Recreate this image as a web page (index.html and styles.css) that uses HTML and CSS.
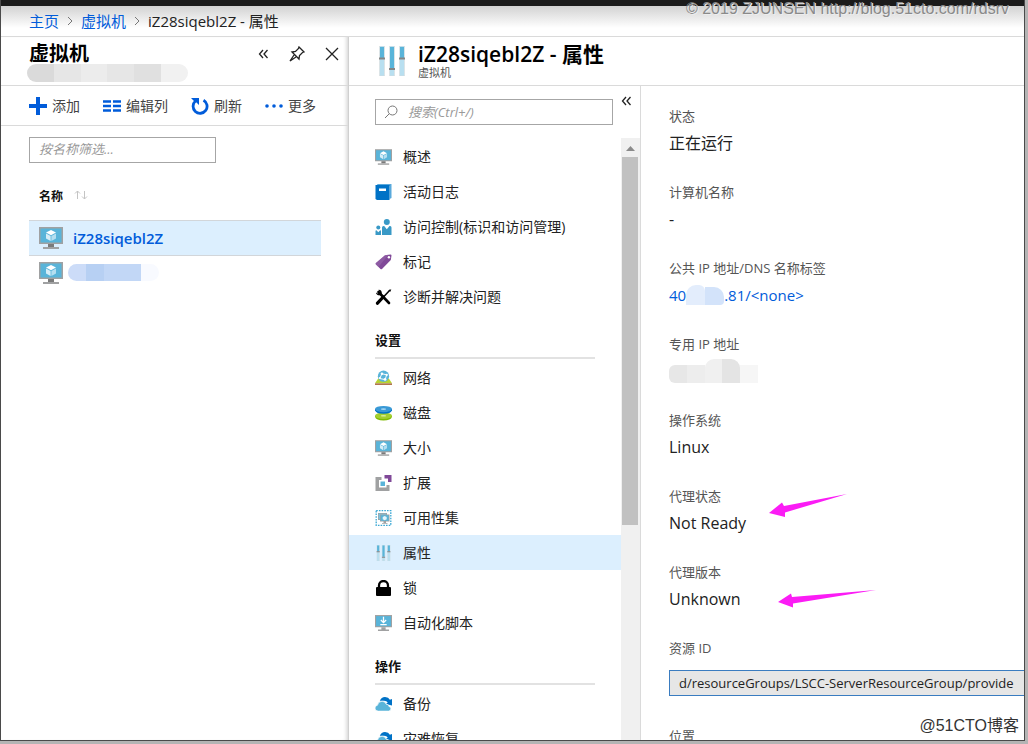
FILE: index.html
```html
<!DOCTYPE html>
<html lang="zh-CN">
<head>
<meta charset="utf-8">
<meta name="viewport" content="width=device-width, initial-scale=1">
<title>iZ28siqebl2Z - 属性</title>
<link rel="stylesheet" href="styles.css">
</head>
<body>
<svg class="sprite" aria-hidden="true">
  <symbol id="i-vm" viewBox="0 0 24 22">
    <path fill="#a0a1a2" d="M0 0h24v17H0z"/><path fill="#59b4d9" d="M1.500 1.500h21v14h-21z"/>
    <path fill="#7a7a7a" d="M9 17h6v3H9z"/><path fill="#a0a1a2" d="M4 20h16v2H4z"/>
    <path fill="#fff" d="M12 3l5 2.600-5 2.600-5-2.600z"/><path fill="#d6edf7" d="M7 6.500l4.600 2.400v5.100L7 11.500z"/><path fill="#b5def0" d="M17 6.500l-4.600 2.400v5.100l4.600-2.500z"/>
  </symbol>
  <symbol id="i-log" viewBox="0 0 16 16">
    <path fill="#59a9dc" d="M2 0h14v14l-2 1V2H1z"/><path fill="#0072c6" d="M0 1h14v15H1.500L0 15z"/><path fill="#fff" d="M3.500 4.500h7v2.500h-7z"/>
  </symbol>
  <symbol id="i-people" viewBox="0 0 16 16">
    <g fill="#3999c6"><circle cx="11.300" cy="3" r="3"/><path d="M6.500 16V8.500Q6.500 7 8 7h.7l2.600 3.200L14 7h.6Q16 7 16 8.500V16z"/><circle cx="2.800" cy="8.500" r="2"/><path d="M0 16v-4q0-.8.900-.8l1.900 2 1.900-2q.8 0 .8.800v4z"/></g>
  </symbol>
  <symbol id="i-tag" viewBox="0 0 16 16">
    <path fill="#804998" d="M9.500 1.200L15 .5q1 0 1 1L15.300 6 6.500 15q-.8.700-1.500 0L.4 10.500q-.7-.7 0-1.400z"/><path fill="#9a6bae" d="M9.500 1.200L.4 9.100q-.7.700 0 1.400L3 13 13 .8z" opacity=".5"/><circle cx="13.400" cy="3.200" r="1.200" fill="#fff"/>
  </symbol>
  <symbol id="i-tools" viewBox="0 0 16 16">
    <path d="M3 3l10.500 11" stroke="#000" stroke-width="2.600" stroke-linecap="round"/><path d="M.5 3.500L2.600 4.800 4.300 3 3 .7Q6.500.5 6.300 4.500L4.500 6.300Q.7 6.500.5 3.500z"/>
    <path d="M14.500 1L8 8" stroke="#000" stroke-width="1.500"/><path d="M7.700 8L2 14.200" stroke="#000" stroke-width="3.200" stroke-linecap="round"/><path d="M15.800.3L13 1.300l1.700 1.800z"/>
  </symbol>
  <symbol id="i-network" viewBox="0 0 16 14">
    <path fill="#b8d432" d="M3 7.500h10l3 4.500H0z"/><path fill="#b0764b" d="M0 12h16v1.600H0z"/><circle cx="8" cy="5.300" r="5.300" fill="#59b4d9"/>
    <path stroke="#fff" stroke-width=".9" fill="none" d="M4.500 7.500l2-4.500 4.500 1-1.500 4.500-5-1"/><g fill="#fff"><circle cx="6.500" cy="3" r="1.200"/><circle cx="11" cy="4" r="1.100"/><circle cx="4.500" cy="7" r="1"/><circle cx="9.500" cy="8.400" r="1.300"/></g>
  </symbol>
  <symbol id="i-disk" viewBox="0 0 16 14">
    <path fill="#7fba00" d="M0 9.500h16v1Q15 14 8 14T0 10.500z"/><ellipse cx="8" cy="9.600" rx="8" ry="3" fill="#a4cf30"/><ellipse cx="8" cy="9.600" rx="2.500" ry=".8" fill="#dcec9c"/>
    <path fill="#0072c6" d="M0 3.300h16v1Q15 7.600 8 7.600T0 4.300z"/><ellipse cx="8" cy="3.300" rx="8" ry="3" fill="#3999d6"/><ellipse cx="8" cy="3.300" rx="2.500" ry=".8" fill="#a5d5f2"/>
  </symbol>
  <symbol id="i-ext" viewBox="0 0 16 16">
    <path fill="#a0a1a2" d="M0 2h6v3H3.500v7.500H11V10h3v6H0z"/><path fill="#804998" d="M9 0h7v7h-3.500V3.500H9z"/><path fill="#59b4d9" d="M5 6.500h4.500V11H5z"/>
  </symbol>
  <symbol id="i-set" viewBox="0 0 16 16">
    <path fill="none" stroke="#3ba8d4" stroke-width="1.300" stroke-dasharray="1.600 1.100" d="M.7.700h14.600v14.600H.7z"/>
    <path fill="#a0a1a2" d="M2.500 3h9v7h-9z"/><path fill="#7cc3e0" d="M3.200 3.700h7.600v5.600H3.200z"/><path fill="#a0a1a2" d="M4.500 4.500H14v7h-3.500V13H12v.8H6.500V13H8v-1.500H4.500z"/><path fill="#59b4d9" d="M5.200 5.200h8v5.600h-8z"/><path fill="#e6f5fb" d="M9.200 6l2 1v2.300l-2 1-2-1V7z"/>
  </symbol>
  <symbol id="i-sliders" viewBox="0 0 26 30">
    <path fill="#b8dff0" stroke="#dcdcdc" stroke-width=".6" d="M.5 0h5v30h-5zM10.500 0h5v30h-5zM20.500 0h5v30h-5z"/><path fill="#59b4d9" d="M1 1h4v11H1zM11 1h4v21h-4zM21 1h4v11h-4z"/><path fill="#858585" d="M0 11.500h6v2H0zM10 22h6v2h-6zM20 11.500h6v2h-6z"/>
  </symbol>
  <symbol id="i-lock" viewBox="0 0 16 16">
    <path d="M3.500 8V5.500a4.500 4.500 0 0 1 9 0V8" fill="none" stroke="#000" stroke-width="2.300"/><rect x=".5" y="7" width="15" height="9" rx="1"/>
  </symbol>
  <symbol id="i-script" viewBox="0 0 16 15">
    <path fill="#a0a1a2" d="M0 0h16v11.500H0z"/><path fill="#59b4d9" d="M1 1h14v9.500H1z"/><path fill="#a0a1a2" d="M6 11.500h4v2H6zM2.800 13.500h10.400V15H2.800z"/><path d="M8 1.500V7M5.500 4.700L8 7.200l2.500-2.500M5 9h6" fill="none" stroke="#fff" stroke-width="1.200"/>
  </symbol>
  <symbol id="i-backup" viewBox="0 0 16 14">
    <path fill="#0072c6" d="M4.500 4Q6 .3 9.500.4 12.800.5 14 3L16 2.400V8.500L10.300 7l1.700-1.500Q11 4 8.500 4z"/>
    <path fill="#59b4d9" stroke="#fff" stroke-width=".6" d="M3 13.700Q0 13.500 0 10.800 0 8.600 2.300 8.200 3 4.500 6.700 4.400q2.800.1 3.900 2.900 2.200-.3 2.500 2 2 .4 1.900 2.300-.2 2-2.300 2.100z"/>
  </symbol>
</svg>

<div class="window">
  <div class="topbar"></div>
  <nav class="crumbs" aria-label="导航路径">
    <a href="#">主页</a>
    <svg class="sep" viewBox="0 0 6 10" aria-hidden="true"><path d="M1 1l4 4-4 4"/></svg>
    <a href="#">虚拟机</a>
    <svg class="sep" viewBox="0 0 6 10" aria-hidden="true"><path d="M1 1l4 4-4 4"/></svg>
    <span>iZ28siqebl2Z - 属性</span>
  </nav>

  <div class="blades">
    <section class="list-blade">
      <header class="blade-head list-head">
        <div class="list-title">
          <h1>虚拟机</h1>
          <div class="mask mask-title" aria-hidden="true"><i></i><i></i><i></i><i></i><i></i><i></i></div>
        </div>
        <div class="head-actions">
          <button type="button" aria-label="折叠"><svg width="11" height="10" viewBox="0 0 11 10"><path d="M5 1L1.500 5 5 9M9.500 1L6 5l3.500 4"/></svg></button>
          <button type="button" aria-label="固定"><svg width="16" height="16" viewBox="0 0 16 16"><path d="M10 1l5 5-1.500.5L10.500 9.500 10 13 7 10 3 6 6.500 5.500 9.500 2.500zM5 9L1 15l6-4"/></svg></button>
          <button type="button" aria-label="关闭"><svg width="14" height="14" viewBox="0 0 14 14"><path d="M1 1l12 12M13 1L1 13"/></svg></button>
        </div>
      </header>
      <div class="toolbar">
        <button type="button"><svg width="18" height="18" viewBox="0 0 18 18"><path d="M9 0v18M0 9h18" stroke="#015cda" stroke-width="4"/></svg>添加</button>
        <button type="button"><svg width="18" height="14" viewBox="0 0 18 14"><path d="M0 2.500h8M10 2.500h8M0 7h8M10 7h8M0 11.500h8M10 11.500h8" stroke="#015cda" stroke-width="2.500"/></svg>编辑列</button>
        <button type="button"><svg width="18" height="18" viewBox="0 0 18 18"><path d="M12.500 3.200A7 7 0 1 1 4.500 4" fill="none" stroke="#015cda" stroke-width="2.800"/><path d="M0 1h8v7L5.500 5.500 3 4z" fill="#015cda"/></svg>刷新</button>
        <button type="button"><svg width="18" height="4" viewBox="0 0 18 4" fill="#015cda"><circle cx="2" cy="2" r="1.800"/><circle cx="9" cy="2" r="1.800"/><circle cx="16" cy="2" r="1.800"/></svg>更多</button>
      </div>
      <div class="list-body">
        <input class="box filter" type="text" placeholder="按名称筛选..." aria-label="按名称筛选">
        <table class="vms">
          <thead><tr><th scope="col">名称<svg width="14" height="10" viewBox="0 0 14 10" aria-hidden="true"><path d="M3.500 9V1M1 3.500L3.500 1 6 3.500M10.500 1v8M8 6.500L10.500 9 13 6.500"/></svg></th></tr></thead>
          <tbody>
            <tr class="current"><td><a href="#"><svg width="24" height="22"><use href="#i-vm"/></svg>iZ28siqebl2Z</a></td></tr>
            <tr><td><a href="#" aria-label="虚拟机"><svg width="24" height="22"><use href="#i-vm"/></svg><span class="mask mask-vm"><i></i><i></i><i></i><i></i><i></i></span></a></td></tr>
          </tbody>
        </table>
      </div>
    </section>

    <section class="detail-blade">
      <header class="blade-head detail-head">
        <svg width="26" height="30" aria-hidden="true"><use href="#i-sliders"/></svg>
        <div><h2>iZ28siqebl2Z - 属性</h2><p>虚拟机</p></div>
      </header>
      <div class="detail-body">
        <div class="menu-pane">
          <div class="search-row">
            <label class="box search"><svg width="14" height="14" viewBox="0 0 14 14" aria-hidden="true"><circle cx="8.500" cy="5.500" r="4.500"/><path d="M5.300 8.700L1 13"/></svg><input type="search" placeholder="搜索(Ctrl+/)" aria-label="搜索"></label>
            <button class="collapse" type="button" aria-label="折叠菜单"><svg width="11" height="10" viewBox="0 0 11 10"><path d="M5 1L1.500 5 5 9M9.500 1L6 5l3.500 4"/></svg></button>
          </div>
          <div class="menu-scroll">
            <nav class="menu" aria-label="资源菜单">
              <a href="#"><svg><use href="#i-vm"/></svg>概述</a>
              <a href="#"><svg><use href="#i-log"/></svg>活动日志</a>
              <a href="#"><svg><use href="#i-people"/></svg>访问控制(标识和访问管理)</a>
              <a href="#"><svg><use href="#i-tag"/></svg>标记</a>
              <a href="#"><svg><use href="#i-tools"/></svg>诊断并解决问题</a>
              <h3>设置</h3>
              <a href="#"><svg><use href="#i-network"/></svg>网络</a>
              <a href="#"><svg><use href="#i-disk"/></svg>磁盘</a>
              <a href="#"><svg><use href="#i-vm"/></svg>大小</a>
              <a href="#"><svg><use href="#i-ext"/></svg>扩展</a>
              <a href="#"><svg><use href="#i-set"/></svg>可用性集</a>
              <a href="#" class="current" aria-current="page"><svg><use href="#i-sliders"/></svg>属性</a>
              <a href="#"><svg><use href="#i-lock"/></svg>锁</a>
              <a href="#"><svg><use href="#i-script"/></svg>自动化脚本</a>
              <h3>操作</h3>
              <a href="#"><svg><use href="#i-backup"/></svg>备份</a>
              <a href="#"><svg><use href="#i-backup"/></svg>灾难恢复</a>
            </nav>
            <div class="track" aria-hidden="true"><svg width="9" height="5" viewBox="0 0 9 5"><path d="M0 5l4.500-5L9 5z" fill="#8a8a8a"/></svg><div class="thumb"></div></div>
          </div>
        </div>

        <div class="props">
          <dl>
            <div><dt>状态</dt><dd>正在运行</dd></div>
            <div><dt>计算机名称</dt><dd>-</dd></div>
            <div><dt>公共 IP 地址/DNS 名称标签</dt><dd><a href="#">40<span class="mask mask-ip"><i></i><i></i></span>.81/&lt;none&gt;</a></dd></div>
            <div><dt>专用 IP 地址</dt><dd><span class="mask mask-private"><i></i><i></i><i></i><i></i><i></i></span></dd></div>
            <div><dt>操作系统</dt><dd>Linux</dd></div>
            <div><dt>代理状态</dt><dd>Not Ready</dd></div>
            <div><dt>代理版本</dt><dd>Unknown</dd></div>
            <div class="resource"><dt><label for="rid">资源 ID</label></dt><dd><input id="rid" type="text" readonly value="d/resourceGroups/LSCC-ServerResourceGroup/provide"></dd></div>
            <div><dt>位置</dt><dd></dd></div>
          </dl>
          <svg class="arrows" width="110" height="116" viewBox="0 0 110 116" aria-hidden="true"><path d="M1 20L14 9.500l2 3.500L79 1 17 19.500V24zM10 109l13-8.500 1 3.500 84-7-83 13.500v4z"/></svg>
        </div>
      </div>
    </section>
  </div>
  <div class="credit">© 2019 ZJUNSEN http://blog.51cto.com/rdsrv</div>
  <div class="brand">@51CTO博客</div>
</div>
</body>
</html>
```
FILE: styles.css
```css
* { box-sizing: border-box; }
body {
  margin: 0;
  height: 100vh;
  overflow: hidden;
  padding: 0 3px 3px 0;
  background: #b4b4b4;
  color: #222;
  font: 14px/20px "Open Sans", "Noto Sans CJK SC", sans-serif;
}
h1, h2, h3, p, dl, dd { margin: 0; }
a { color: #015cda; text-decoration: none; }
button { border: 0; padding: 0; background: none; color: inherit; font: inherit; display: flex; align-items: center; }
input { font: inherit; color: inherit; }
svg { flex: none; }
.sprite { position: absolute; width: 0; height: 0; }

.window {
  position: relative;
  height: 100%;
  display: flex;
  flex-direction: column;
  overflow: hidden;
  background: #fff;
  border: solid #4a4a4a;
  border-width: 0 1px 1px 1px;
}
.topbar { flex: none; height: 6px; background: #1b1b1b; }
.crumbs {
  flex: none;
  height: 31px;
  display: flex;
  align-items: center;
  gap: 8px;
  padding-left: 28px;
  border-bottom: 1px solid #dadada;
  background: linear-gradient(#d2d2d2, #fff 22px);
  font-size: 15px;
}
.sep { width: 6px; height: 10px; fill: none; stroke: #777; }
.blades { flex: 1; min-height: 0; display: flex; }

.list-blade {
  flex: none;
  width: 348px;
  border-right: 1px solid #d0d0d0;
  box-shadow: inset -4px 0 4px -3px #ccc;
}
.blade-head { height: 49px; display: flex; border-bottom: 1px solid #dadada; }
.list-head { justify-content: space-between; padding: 4px 9px 0 28px; }
h1, h2 { font-size: 20px; line-height: 26px; font-weight: 600; color: #000; }
h2 { font-size: 21px; }
.list-title { position: relative; }
.head-actions { display: flex; gap: 20px; height: 26px; align-items: center; }
.head-actions svg, .collapse svg { fill: none; stroke: #222; stroke-width: 1.300; }

.mask { display: inline-flex; overflow: hidden; }
.mask i { flex: 1; }
.mask-title { position: absolute; left: -2px; top: 23px; width: 161px; height: 18px; border-radius: 9px; }
.mask-title i { background: #e6e6e6; }
.mask-title i:nth-child(1) { background: #dadada; }
.mask-title i:nth-child(3) { background: #ececec; }
.mask-title i:nth-child(5) { background: #e0e0e0; }
.mask-title i:nth-child(6) { background: #f1f1f1; }

.toolbar { height: 40px; display: flex; align-items: center; gap: 23px; padding-left: 28px; border-bottom: 1px solid #dadada; color: #444; }
.toolbar button { gap: 5px; }
.list-body { padding: 11px 27px 0 28px; }
.box { display: flex; align-items: center; height: 26px; border: 1px solid #a6a6a6; background: #fff; }
.filter { width: 187px; padding: 0 9px 2px; font-size: 13px; }
::placeholder { color: #999; font-style: italic; opacity: 1; }
.vms { width: 100%; margin-top: 15px; border-collapse: collapse; }
.vms th { height: 42px; padding: 0 10px 4px; font-size: 12px; line-height: 20px; text-align: left; color: #111; }
.vms th svg { margin-left: 11px; fill: none; stroke: #c4c4c4; vertical-align: 1px; }
.vms td { height: 35px; padding: 0 10px; }
.vms a { display: flex; align-items: center; gap: 10px; font-size: 15px; font-weight: 600; }
.vms .current td { background: #dceffe; border: solid #d2d6da; border-width: 1px 0; }
.mask-vm { width: 91px; height: 17px; margin-left: -5px; border-radius: 9px; }
.mask-vm i { background: #c2d7f6; }
.mask-vm i:nth-child(1) { background: #ccdcf8; }
.mask-vm i:nth-child(2) { background: #b7d0f3; }
.mask-vm i:nth-child(5) { background: #f8faff; }

.detail-blade { flex: 1; min-width: 0; display: flex; flex-direction: column; }
.detail-head { flex: none; padding: 4px 0 0 30px; gap: 13px; }
.detail-head svg { margin-top: 5px; }
.detail-head p { font-size: 11px; line-height: 12px; color: #555; }
.detail-body { flex: 1; min-height: 0; display: flex; }
.menu-pane { flex: none; width: 292px; display: flex; flex-direction: column; border-right: 1px solid #dadada; }
.search-row { flex: none; display: flex; gap: 8px; height: 52px; padding: 13px 8px 0 26px; }
.search { flex: 1; gap: 10px; padding: 0 8px; }
.search svg { fill: none; stroke: #777; }
.search input { flex: 1; min-width: 0; border: 0; padding: 0; outline: 0; background: none; font-size: 13px; }
.collapse { height: 3px; }
.menu-scroll { flex: 1; min-height: 0; display: flex; overflow: hidden; }
.menu { flex: 1; padding-top: 1px; }
.menu a { display: flex; align-items: center; gap: 11px; height: 35px; padding-left: 26px; color: #222; }
.menu a svg { width: 17px; height: 16px; }
.menu .current { background: #dceffe; }
.menu h3 { height: 45px; margin: 0 26px 1px; padding-top: 16px; border-bottom: 2px solid #e2e2e2; font-size: 13px; line-height: 20px; color: #111; }
.track { flex: none; width: 19px; padding: 8px 2px 0 1px; background: #f0f0f0; display: flex; flex-direction: column; align-items: center; gap: 6px; }
.thumb { width: 100%; height: 62%; flex: none; background: #c1c1c1; }

.props { flex: 1; min-width: 0; position: relative; padding: 20px 0 0 28px; overflow: hidden; }
.props dl > div { height: 76px; }
.props dt { font-size: 13px; line-height: 20px; color: #555; white-space: nowrap; }
.props dd { margin-top: 5px; font-size: 16px; line-height: 24px; }
.props dd a { display: flex; align-items: center; font-size: 15px; }
.mask-ip { width: 38px; height: 20px; }
.mask-ip i { background: #e3edfc; border-radius: 10px 6px 0 0; }
.mask-ip i + i { margin-top: 2px; background: #d3e3fa; border-radius: 0 10px 4px 0; }
.mask-private { width: 89px; height: 24px; }
.mask-private i { margin-top: 6px; background: #ededed; }
.mask-private i:nth-child(1) { background: #e7e7e7; border-radius: 6px 0 0 6px; }
.mask-private i:nth-child(3) { margin-top: 0; border-radius: 9px 0 0 0; background: #f0f0f0; }
.mask-private i:nth-child(4) { margin-top: 0; border-radius: 0 9px 0 0; background: #e4e4e4; }
.mask-private i:nth-child(5) { background: #f6f6f6; }
.props dl .resource { height: 88px; }
.resource dd { margin-top: 12px; }
.resource input { display: block; width: 100%; height: 26px; padding: 0 0 0 9px; border: 1px solid #3a7cc0; border-right: 0; border-radius: 0; background: #e6e6e6; font-size: 13px; }
.arrows { position: absolute; left: 127px; top: 407px; fill: #fb1cf5; }

.credit { position: absolute; right: 15px; top: 0; font: 16px/18px "Liberation Sans", sans-serif; color: #8a8a8a; text-shadow: 1px 1px 0 #eee; white-space: nowrap; }
.brand { position: absolute; right: 5px; bottom: 4px; font: 16px/20px "Liberation Sans", "Noto Sans CJK SC", sans-serif; color: #333; text-shadow: 1px 1px 0 #fff; }
```
